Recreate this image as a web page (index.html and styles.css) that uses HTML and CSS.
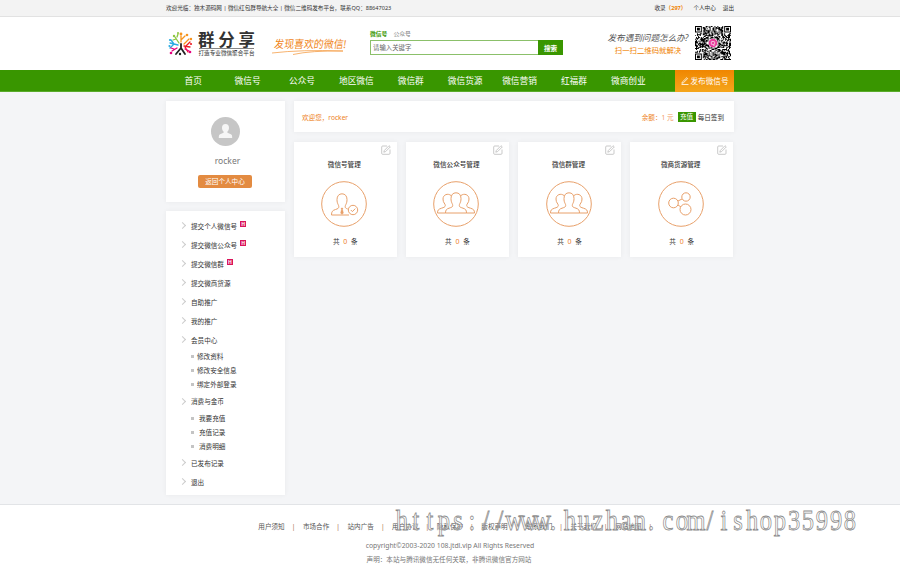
FILE: index.html
```html
<!DOCTYPE html>
<html lang="zh-CN">
<head>
<meta charset="UTF-8">
<title>群分享 - 个人中心</title>
<link rel="stylesheet" href="styles.css">
</head>
<body>

<!-- icons used more than once -->
<svg width="0" height="0" class="defs">
    <symbol id="edit" viewBox="0 0 10 10">
        <path d="M6 1H1.7Q.7 1 .7 2v6.300q0 1 1 1h6.300q1 0 1-1V4.500M3.300 5.500 8 .7l1.300 1.200L4.600 6.600l-1.800.6z"/>
    </symbol>
    <symbol id="group" viewBox="0 0 46 46">
        <circle cx="23" cy="23" r="22.300"/>
        <path d="M18 14.500c-3-2.500-8-1-8 3.500 0 4 2.300 4.500 2.300 6.500 0 1.500-1.500 2-3.800 2.700-3 1-4 1.800-4 4.800H12.500M28 14.500c3-2.500 8-1 8 3.500 0 4-2.300 4.500-2.300 6.500 0 1.500 1.500 2 3.800 2.700 3 1 4 1.800 4 4.800H33.500"/>
        <path class="front" d="M12.500 32c0-3 1-4 3.500-4.800 2.800-1 3.700-1.200 3.700-2.700 0-2-1.700-2.500-1.700-7 0-3.700 2-5.700 5-5.700s5 2 5 5.700c0 4.500-1.700 5-1.700 7 0 1.500.9 1.700 3.700 2.700 2.500.8 3.500 1.800 3.500 4.800z"/>
    </symbol>
</svg>

<div class="topbar">
    <div class="wrap">
        <span class="greet">欢迎光临：独木源码网 | 微信红包群导航大全 | 微信二维码发布平台，联系QQ：88647023</span>
        <div class="links"><a>收录<b>（297）</b></a><a>个人中心</a><a>退出</a></div>
    </div>
</div>

<div class="header">
    <div class="wrap">
        <svg class="logo" width="92" height="32" viewBox="0 0 92 32">
            <g fill="none" stroke-width="1.300" stroke-linecap="round">
                <path stroke="#222" stroke-width="1.800" d="M15 16v4l-5 6M15 20l4 6"/>
                <path stroke="#f7941d" d="M15 14V8M15 12l4-4M18 16l5-5"/>
                <path stroke="#8cc63f" d="M13 15 9 9M10 11l-3 1M11 9l1-3"/>
                <path stroke="#29abe2" d="M12 17 4 15M8 16l-3-4M8 16l-4 4"/>
                <path stroke="#ed1c24" d="M18 18l6 1M20 18l4-4M19 19l3 5"/>
                <path stroke="#e6007e" d="M11 20l-5 3M8 21l-3-1M19 21l4 2"/>
            </g>
            <circle cx="15" cy="6" r="1.400" fill="#f7941d"/><circle cx="21" cy="7" r="1.300" fill="#f7941d"/>
            <circle cx="8" cy="8" r="1.200" fill="#8cc63f"/><circle cx="12" cy="5" r="1" fill="#8cc63f"/>
            <circle cx="4" cy="12" r="1.100" fill="#29abe2"/><circle cx="3.500" cy="18" r="1.100" fill="#29abe2"/>
            <circle cx="25" cy="11" r="1.200" fill="#f7941d"/><circle cx="25" cy="16" r="1.100" fill="#ed1c24"/>
            <circle cx="5" cy="25" r="1.300" fill="#e6007e"/><circle cx="24" cy="24" r="1.300" fill="#e6007e"/>
            <circle cx="14" cy="26" r="1.200" fill="#222"/>
            <text class="name" x="32" y="18" textLength="57" lengthAdjust="spacing">群分享</text>
            <path stroke="#333" stroke-width=".6" d="M33 20.500H88"/>
            <text class="sub" x="32.500" y="27.300" textLength="56" lengthAdjust="spacingAndGlyphs">打造专业微信聚合平台</text>
        </svg>

        <svg class="slogan" width="80" height="24" viewBox="0 0 80 24">
            <text x="5" y="16" textLength="72" lengthAdjust="spacingAndGlyphs" transform="skewX(-8)">发现喜欢的微信!</text>
            <path d="M1 21Q30 17.500 72 19Q40 18.500 22 22.500"/>
        </svg>

        <div class="search">
            <div class="tabs"><b>微信号</b><span>公众号</span></div>
            <div class="box"><input type="text" placeholder="请输入关键字"><button>搜索</button></div>
        </div>

        <div class="help">
            <p class="ask">发布遇到问题怎么办?</p>
            <p class="scan">扫一扫二维码就解决</p>
        </div>
        <svg class="qr" id="qr" width="36" height="34" viewBox="0 0 37 37" preserveAspectRatio="none"></svg>
    </div>
</div>

<div class="nav">
    <div class="wrap">
        <a>首页</a><a>微信号</a><a>公众号</a><a>地区微信</a><a>微信群</a><a>微信货源</a><a>微信营销</a><a>红福群</a><a>微商创业</a>
        <a class="publish"><svg width="8" height="8" viewBox="0 0 8 8"><path d="M1.200 5.200 5.800.7l.9.900L2.200 6l-1.400.3zM.5 7.500h7"/></svg>发布微信号</a>
    </div>
</div>

<div class="main wrap">
    <div class="side">
        <div class="panel user">
            <svg width="29" height="29" viewBox="0 0 29 29">
                <circle cx="14.500" cy="14.500" r="14.500" fill="#c6c6c6"/>
                <path fill="#f6f6f6" d="M14.500 7c2.300 0 3.500 1.500 3.500 3.700 0 1.700-.7 3-1.600 3.900v1.200l3.500 1.500c1 .5 1.300 1.200 1.300 3.700H7.800c0-2.500.3-3.200 1.300-3.700l3.500-1.500v-1.200C11.700 13.700 11 12.400 11 10.700 11 8.500 12.200 7 14.500 7z"/>
            </svg>
            <p>rocker</p>
            <a class="back">返回个人中心</a>
        </div>

        <ul class="panel menu">
            <li>提交个人微信号<i>H</i></li>
            <li>提交微信公众号<i>H</i></li>
            <li>提交微信群<i>H</i></li>
            <li>提交微商货源</li>
            <li>自助推广</li>
            <li>我的推广</li>
            <li>会员中心</li>
            <li class="sub">修改资料</li>
            <li class="sub">修改安全信息</li>
            <li class="sub">绑定外部登录</li>
            <li>消费与金币</li>
            <li class="sub in">我要充值</li>
            <li class="sub in">充值记录</li>
            <li class="sub in">消费明细</li>
            <li>已发布记录</li>
            <li>退出</li>
        </ul>
    </div>

    <div class="content">
        <div class="panel welcome">
            <span>欢迎您，rocker</span>
            <div class="money">余额：<em>1 元</em><a class="pay">充值</a><a class="sign">每日签到</a></div>
        </div>

        <div class="cards">
            <div class="panel card">
                <svg class="edit"><use href="#edit"/></svg>
                <h3>微信号管理</h3>
                <svg class="pic" viewBox="0 0 46 46">
                    <circle cx="23" cy="23" r="22.300"/>
                    <path d="M28 34H10.500c0-3.500 1-4.500 4-5.500 2.500-.8 3.300-1.300 3.300-2.800 0-2-1.800-2.700-1.800-7.200 0-3.500 2-5.700 5-5.700s5 2.200 5 5.700c0 4.500-1.800 5.200-1.800 7.200 0 1.200.7 1.700 2.500 2.300"/>
                    <path class="tie" d="M20 27h2l-.4 1.500.9 3.500-1.500 1.500-1.500-1.500.9-3.500z"/>
                    <circle class="front" cx="32" cy="29" r="4.700"/>
                    <path d="M29.800 29l1.600 1.600 2.900-3"/>
                </svg>
                <p>共 <em>0</em> 条</p>
            </div>
            <div class="panel card">
                <svg class="edit"><use href="#edit"/></svg>
                <h3>微信公众号管理</h3>
                <svg class="pic"><use href="#group"/></svg>
                <p>共 <em>0</em> 条</p>
            </div>
            <div class="panel card">
                <svg class="edit"><use href="#edit"/></svg>
                <h3>微信群管理</h3>
                <svg class="pic"><use href="#group"/></svg>
                <p>共 <em>0</em> 条</p>
            </div>
            <div class="panel card">
                <svg class="edit"><use href="#edit"/></svg>
                <h3>微商货源管理</h3>
                <svg class="pic" viewBox="0 0 46 46">
                    <circle cx="23" cy="23" r="22.300"/>
                    <circle cx="15.500" cy="22" r="4.800"/>
                    <circle cx="28" cy="16" r="4.200"/>
                    <circle cx="27.500" cy="28.500" r="5.500"/>
                    <path d="M20 20l4-2M20 24l3 2"/>
                </svg>
                <p>共 <em>0</em> 条</p>
            </div>
        </div>
    </div>
</div>

<div class="footer">
    <div class="links">
        <a>用户须知</a><a>市场合作</a><a>站内广告</a><a>用户协议</a><a>隐私保护</a><a>版权声明</a><a>联系我们</a><a>关于我们</a><a>网站地图</a>
    </div>
    <p>copyright©2003-2020 108.jtdl.vip All Rights Reserved</p>
    <p class="note">声明：本站与腾讯微信无任何关联，非腾讯微信官方网站</p>
    <svg class="watermark" width="470" height="32" viewBox="0 0 470 32"><text id="mark" y="25" transform="scale(.86 1)">https://www.huzhan.com/ishop35998</text></svg>
</div>

<script>
    // one fixed-width cell per letter
    const mark = document.getElementById('mark');
    mark.setAttribute('x', [...mark.textContent].map((c, i) => (8 + i * 14 - (c === '.' ? 3 : 0)) / 0.86).join(' '));

    // QR code
    const n = 37;
    let seed = 7;
    let d = '';
    function finder(x, y) {
        const a = x < 9 ? x : x - (n - 7);
        const b = y < 9 ? y : y - (n - 7);
        if ((x > 7 && x < n - 8) || (y > 7 && y < n - 8) || (x >= n - 8 && y >= n - 8)) return -1;
        if (a < 0 || a > 6 || b < 0 || b > 6) return 0;
        const r = Math.max(Math.abs(a - 3), Math.abs(b - 3));
        return r === 2 ? 0 : 1;
    }
    for (let y = 0; y < n; y++) {
        for (let x = 0; x < n; x++) {
            seed = (seed * 16807) % 2147483647;
            const f = finder(x, y);
            if (f === 1 || (f === -1 && seed % 100 < 54)) d += `M${x} ${y}h1v1h-1z`;
        }
    }
    document.getElementById('qr').innerHTML =
        `<path d="${d}"/><circle cx="18.500" cy="18.500" r="5" fill="#fff"/><circle cx="18.500" cy="18.500" r="4.500" fill="#e83e9c"/><text x="18.500" y="20.500" text-anchor="middle">Q</text>`;
</script>
</body>
</html>
```
FILE: styles.css
```css
* {
    box-sizing: border-box;
}
body {
    margin: 0;
    height: 581px;
    overflow: hidden;
    background: #f4f5f7;
    color: #333;
    font-family: "Noto Sans", "Noto Sans CJK SC", sans-serif;
    font-size: 6.6px;
    display: flex;
    flex-direction: column;
}
p, ul, h3 {
    margin: 0;
    padding: 0;
}
em, i {
    font-style: normal;
}
svg {
    display: block;
    flex: none;
}
.defs {
    position: absolute;
}
.wrap {
    width: 568px;
    margin: 0 auto;
    display: flex;
}

.topbar {
    height: 17px;
    background: #f3f3f3;
    border-bottom: 1px solid #e2e2e2;
    font-size: 5.6px;
    line-height: 16px;
}
.topbar .wrap {
    justify-content: space-between;
}
.greet {
    white-space: nowrap;
}
.topbar .links {
    display: flex;
    gap: 7px;
}
.topbar b {
    color: #f08200;
}

.header {
    height: 53px;
    background: #fff;
}
.logo {
    margin-top: 11px;
}
.logo .name {
    font-size: 16.5px;
    font-weight: bold;
    fill: #333;
}
.logo .sub {
    font-size: 6px;
    fill: #333;
}
.slogan {
    margin: 15px 0 0 13px;
    overflow: visible;
}
.slogan text {
    font-size: 11px;
    fill: #f08519;
}
.slogan path {
    fill: none;
    stroke: #f5a04a;
    stroke-width: .8;
}
.search {
    width: 193px;
    margin: 13px 0 0 19px;
}
.tabs {
    display: flex;
    gap: 6px;
    height: 10px;
    line-height: 9px;
    font-size: 5.8px;
    color: #777;
}
.tabs b {
    color: #399600;
}
.box {
    display: flex;
    height: 15px;
}
.box input {
    width: 168px;
    padding: 0 2px;
    border: 1px solid #8bc06a;
    border-right: 0;
    font: inherit;
    font-size: 6.4px;
    outline: none;
}
.box input::placeholder {
    color: #666;
}
.box button {
    flex: 1;
    border: 0;
    padding: 0;
    background: #399600;
    color: #fff;
    font: bold 6.6px "Noto Sans CJK SC", sans-serif;
}
.help {
    margin: 14px 0 0 43px;
    width: 84px;
    text-align: center;
    white-space: nowrap;
}
.ask {
    font-size: 8.6px;
    line-height: 14px;
    font-style: italic;
    color: #555;
}
.scan {
    font-size: 7.4px;
    line-height: 11px;
    color: #f08200;
}
.qr {
    margin: 9px 0 0 5px;
}
.qr text {
    font-size: 6px;
    fill: #fff;
}

.nav {
    height: 22px;
    background: #399600;
    border-bottom: 1px solid #5aab2b;
}
.nav a {
    width: 54.4px;
    line-height: 22px;
    text-align: center;
    font-size: 8.7px;
    color: #fff;
}
.nav .publish {
    width: 59px;
    margin-left: auto;
    display: flex;
    align-items: center;
    justify-content: center;
    gap: 2px;
    background: linear-gradient(#f08600, #f5a61c);
    font-size: 7.6px;
}
.publish path {
    fill: none;
    stroke: #fff;
    stroke-width: .8;
}

.main {
    flex: 1;
    padding-top: 9px;
    gap: 9px;
}
.panel {
    background: #fff;
    box-shadow: 0 0 5px rgba(0,0,0,.05);
}
.side {
    width: 119px;
}
.user {
    height: 101px;
    padding-top: 16px;
    display: flex;
    flex-direction: column;
    align-items: center;
}
.user p {
    margin: 7px 0 6px 4px;
    font-size: 8.5px;
    line-height: 16px;
    color: #777;
}
.back {
    width: 54px;
    height: 13px;
    margin-right: 1px;
    line-height: 13px;
    border-radius: 2px;
    background: #e38b41;
    color: #fff;
    text-align: center;
}
.menu {
    margin-top: 9px;
    height: 284px;
    padding: 5px 0 0 14px;
    list-style: none;
}
.menu li {
    display: flex;
    align-items: center;
    height: 19px;
}
.menu li::before {
    content: "";
    width: 4px;
    height: 4px;
    margin-right: 6px;
    border: solid #ccc;
    border-width: .8px .8px 0 0;
    transform: rotate(45deg);
}
.menu .sub {
    height: 14.2px;
    padding-left: 11px;
}
.menu .sub::before {
    width: 3px;
    height: 3px;
    margin: 1px 3px 0 0;
    border: 0;
    background: #c4c4c4;
    transform: none;
}
.menu .in::before {
    margin-right: 5px;
}
.menu i {
    width: 6px;
    height: 6px;
    margin: -3px 0 0 3px;
    background: #d9145a;
    color: #fff;
    font-size: 5px;
    font-weight: bold;
    line-height: 6px;
    text-align: center;
}

.content {
    flex: 1;
}
.welcome {
    height: 31px;
    padding: 0 10px 0 8px;
    display: flex;
    align-items: center;
    justify-content: space-between;
    color: #ee8225;
}
.money {
    display: flex;
    align-items: center;
}
.money em {
    color: #f29a62;
}
.pay {
    width: 18px;
    margin: 0 2px 0 4px;
    line-height: 10px;
    background: #399600;
    color: #fff;
    text-align: center;
}
.sign {
    color: #333;
}
.cards {
    margin: 10px 1px 0 0;
    display: grid;
    grid-template-columns: repeat(4, 1fr);
    gap: 9.5px;
}
.card {
    position: relative;
    height: 115px;
    padding: 16px 2px 0 0;
    display: flex;
    flex-direction: column;
    align-items: center;
}
.edit {
    position: absolute;
    top: 3px;
    right: 6px;
    width: 10px;
    height: 10px;
    fill: none;
    stroke: #bbb;
    stroke-width: .8;
}
.card h3 {
    font-size: 6.6px;
    font-weight: 500;
    line-height: 13px;
}
.pic {
    width: 46px;
    height: 46px;
    margin: 10px 0 10px;
    fill: none;
    stroke: #e8a06a;
    stroke-width: 1;
}
.pic .tie {
    fill: #e8a06a;
    stroke-width: .3;
}
.front {
    fill: #fff;
}
.card p {
    padding-left: 2px;
    line-height: 10px;
    word-spacing: 2px;
}
.card em {
    color: #ee7f2d;
    font-size: 7px;
}

.footer {
    position: relative;
    height: 77px;
    background: #fff;
    border-top: 1px solid #e2e4e7;
    text-align: center;
    color: #777;
}
.footer .links {
    display: flex;
    justify-content: center;
    padding: 17px 0 0 18px;
    color: #555;
}
.footer .links a {
    width: 44.6px;
    line-height: 10px;
    display: flex;
    gap: 7px;
}
.footer .links a::after {
    content: "|";
    color: #a5643c;
}
.footer p {
    margin-top: 9px;
    font-size: 6.8px;
    line-height: 10px;
}
.footer .note {
    margin: 4px 0 0 -2px;
    font-size: 6.6px;
}
.watermark {
    position: absolute;
    left: 394px;
    top: 0;
}
.watermark text {
    font: 28.5px "Liberation Serif", serif;
    text-anchor: middle;
    fill: rgba(255,255,255,.5);
    stroke: #8c8c8c;
    stroke-width: .8;
}
```
